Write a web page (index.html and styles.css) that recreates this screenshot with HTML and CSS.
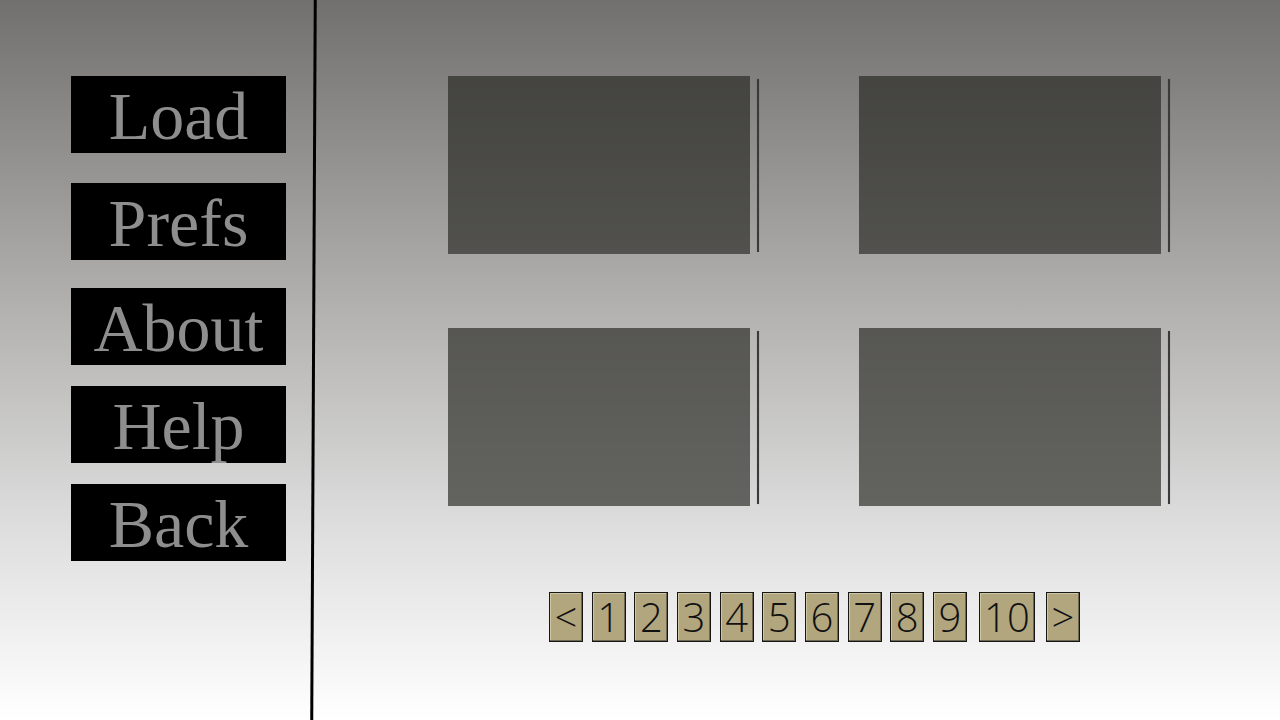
FILE: index.html
```html
<!DOCTYPE html>
<html lang="en">
  <head>
    <meta charset="UTF-8" />
    <meta name="viewport" content="width=device-width, initial-scale=1.0" />
    <title>Load</title>
    <link rel="stylesheet" href="styles.css">
  </head>
  <body>
    <div class="screen">
      <nav class="sidebar">
        <a href="#" class="menu-button">Load</a>
        <a href="#" class="menu-button">Prefs</a>
        <a href="#" class="menu-button">About</a>
        <a href="#" class="menu-button">Help</a>
        <a href="#" class="menu-button">Back</a>
      </nav>

      <div class="divider"></div>

      <main class="content">
        <div class="slots">
          <div class="slot"><div class="slot-box"></div><div class="slot-bar"></div></div>
          <div class="slot"><div class="slot-box"></div><div class="slot-bar"></div></div>
          <div class="slot"><div class="slot-box"></div><div class="slot-bar"></div></div>
          <div class="slot"><div class="slot-box"></div><div class="slot-bar"></div></div>
        </div>

        <div class="pages">
          <button class="page">&lt;</button>
          <button class="page">1</button>
          <button class="page">2</button>
          <button class="page">3</button>
          <button class="page">4</button>
          <button class="page">5</button>
          <button class="page">6</button>
          <button class="page">7</button>
          <button class="page">8</button>
          <button class="page">9</button>
          <button class="page page-wide">10</button>
          <button class="page">&gt;</button>
        </div>
      </main>
    </div>
  </body>
</html>
```

FILE: styles.css
```css
body {
  margin: 0;
  width: 1280px;
  height: 720px;
  overflow: hidden;
  background: linear-gradient(#71706e 0%, #aeadab 40%, #dcdcdc 72%, #ffffff 100%);
  font-family: "Liberation Serif", serif;
}
.screen {
  display: flex;
  height: 720px;
}
.sidebar {
  width: 241px;
  padding: 76px 0 0 71px;
  display: flex;
  flex-direction: column;
  gap: 21px;
}
.menu-button {
  display: block;
  width: 215px;
  height: 77px;
  background-color: #000;
  color: #8e8e8e;
  font-size: 68px;
  line-height: 80px;
  text-align: center;
  text-decoration: none;
}
.menu-button:nth-child(1) {
  margin-bottom: 9px;
}
.menu-button:nth-child(2) {
  margin-bottom: 7px;
}
.divider {
  width: 3px;
  height: 720px;
  background-color: #000;
  transform: rotate(0.28deg);
}
.content {
  padding: 76px 0 0 133px;
}
.slots {
  display: grid;
  grid-template-columns: 311px 311px;
  column-gap: 100px;
  row-gap: 74px;
}
.slot {
  display: flex;
}
.slot-box {
  width: 302px;
  height: 178px;
  background-color: rgba(36, 35, 30, 0.65);
}
.slot-bar {
  width: 2px;
  height: 173px;
  margin: 3px 0 0 7px;
  background-color: #3a3a3a;
  box-shadow: 0 0 1px rgba(0, 0, 0, 0.4);
}
.pages {
  display: flex;
  gap: 8.67px;
  margin: 86px 0 0 101px;
}
.page {
  width: 34px;
  height: 50px;
  padding: 0;
  background-color: #b1a67e;
  border: 1px solid #161616;
  box-shadow: inset -1px -1px 0 #6d6650, inset 1px 1px 0 #cfc6a2;
  color: #111;
  font-family: "Open Sans", sans-serif;
  font-weight: 300;
  font-size: 40px;
  line-height: 48px;
  text-align: center;
  cursor: pointer;
}
.page-wide {
  width: 56px;
  margin: 0 2.33px 0 3.33px;
}
```
